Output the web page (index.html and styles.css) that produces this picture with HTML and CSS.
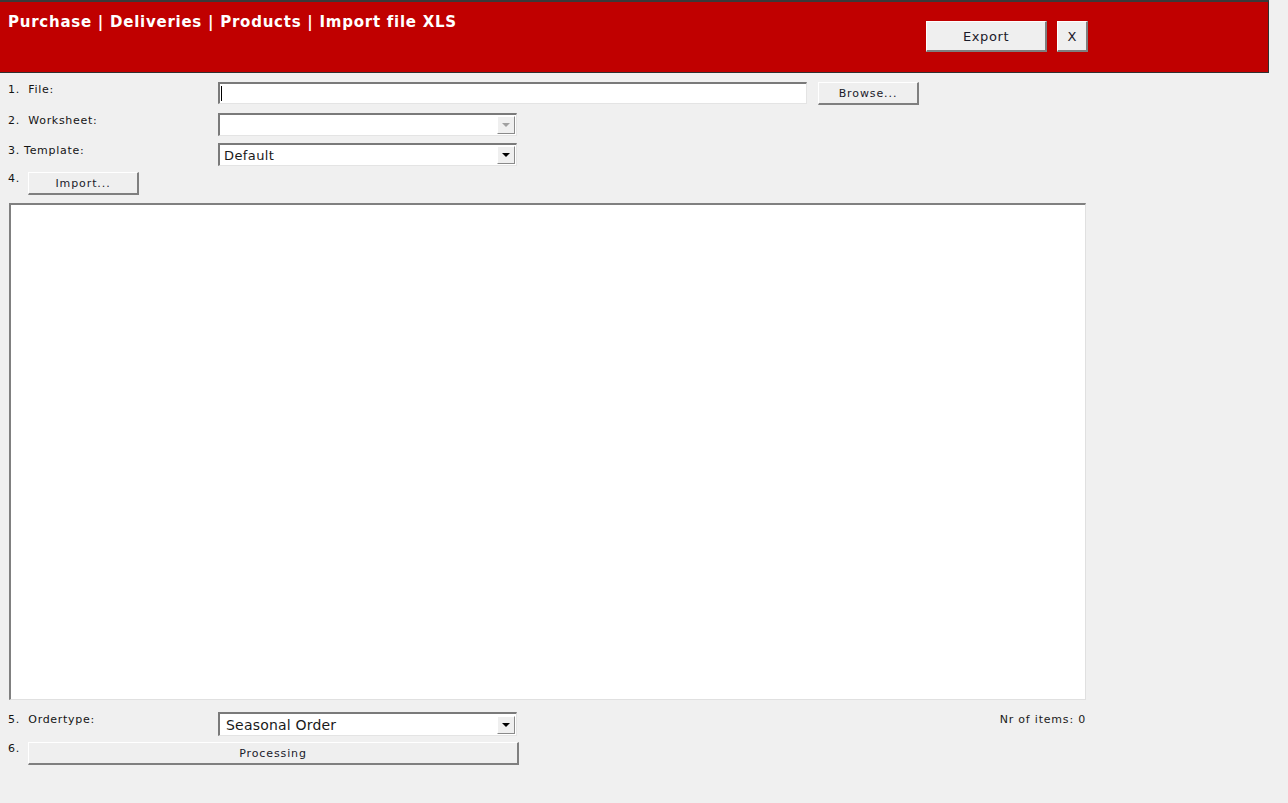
FILE: index.html
```html
<!DOCTYPE html>
<html lang="en">
<head>
  <meta charset="UTF-8" />
  <title>Purchase | Deliveries | Products | Import file XLS</title>
  <link rel="stylesheet" href="styles.css">
</head>
<body>
  <div class="header">
    <h1 class="title">Purchase | Deliveries | Products | Import file XLS</h1>
    <div class="header-actions">
      <button class="btn btn-export">Export</button>
      <button class="btn btn-close">X</button>
    </div>
  </div>

  <div class="form">
    <div class="row row-file">
      <label class="label">1.&nbsp; File:</label>
      <div class="field field-file"><span class="caret"></span></div>
      <button class="btn btn-small btn-browse">Browse...</button>
    </div>

    <div class="row row-sheet">
      <label class="label">2.&nbsp; Worksheet:</label>
      <div class="combo combo-disabled">
        <span class="combo-value"></span>
        <span class="combo-arrow"></span>
      </div>
    </div>

    <div class="row row-template">
      <label class="label">3. Template:</label>
      <div class="combo">
        <span class="combo-value">Default</span>
        <span class="combo-arrow"></span>
      </div>
    </div>

    <div class="row row-import">
      <label class="label label-num">4.</label>
      <button class="btn btn-small btn-import">Import...</button>
    </div>

    <div class="grid-box"></div>

    <div class="row row-order">
      <label class="label">5.&nbsp; Ordertype:</label>
      <div class="combo combo-order">
        <span class="combo-value">Seasonal Order</span>
        <span class="combo-arrow"></span>
      </div>
      <span class="count">Nr of items: 0</span>
    </div>

    <div class="row row-process">
      <label class="label label-num">6.</label>
      <button class="btn btn-small btn-process">Processing</button>
    </div>
  </div>
</body>
</html>
```

FILE: styles.css
```css
body {
  margin: 0;
  background: #f0f0f0;
  font-family: "DejaVu Sans", Verdana, sans-serif;
  color: #1a1a1a;
}

/* top bar */
.header {
  box-sizing: border-box;
  width: 1269px;
  height: 73px;
  background: #c00000;
  border-top: 2px solid #3a3a3a;
  border-right: 1px solid #303030;
  border-bottom: 1px solid #303030;
  display: flex;
  justify-content: space-between;
  align-items: flex-start;
}
.title {
  margin: 10px 0 0 8px;
  font-size: 15px;
  line-height: 20px;
  font-weight: bold;
  color: #fff;
  letter-spacing: 0.75px;
}
.header-actions {
  display: flex;
  gap: 10px;
  margin: 19px 180px 0 0;
}

/* buttons */
.btn {
  box-sizing: border-box;
  background: #efefef;
  border-top: 1px solid #ffffff;
  border-left: 1px solid #ffffff;
  border-right: 2px solid #7f7f7f;
  border-bottom: 2px solid #7f7f7f;
  font-family: "DejaVu Sans", Verdana, sans-serif;
  color: #1a1a2a;
  padding: 0;
  cursor: pointer;
}
.btn-export {
  width: 121px;
  height: 31px;
  font-size: 13px;
  letter-spacing: 0.6px;
}
.btn-close {
  width: 31px;
  height: 31px;
  font-size: 13px;
}
.btn-small {
  height: 23px;
  font-size: 11px;
  letter-spacing: 0.9px;
}
.btn-browse {
  width: 101px;
  margin-left: 11px;
}
.btn-import {
  width: 111px;
}
.btn-process {
  width: 491px;
}

/* form rows */
.form {
  padding: 9px 0 0 0;
}
.row {
  display: flex;
  align-items: flex-start;
}
.row-sheet {
  margin-top: 8px;
}
.row-template {
  margin-top: 7px;
}
.row-import {
  margin-top: 6px;
}
.row-order {
  margin-top: 12px;
  width: 1086px;
}
.row-process {
  margin-top: 6px;
}
.label {
  box-sizing: border-box;
  width: 218px;
  padding: 1px 0 0 8px;
  font-size: 11px;
  line-height: 14px;
  letter-spacing: 0.7px;
  color: #141414;
}
.label-num {
  width: 28px;
  padding-top: 0;
}

/* inset fields */
.field,
.combo {
  box-sizing: border-box;
  background: #fff;
  border-top: 2px solid #7a7a7a;
  border-left: 2px solid #7a7a7a;
  border-right: 1px solid #e4e4e4;
  border-bottom: 1px solid #e4e4e4;
}
.field-file {
  width: 589px;
  height: 22px;
  position: relative;
}
.caret {
  position: absolute;
  left: 1px;
  top: 2px;
  width: 1px;
  height: 15px;
  background: #000;
}
.combo {
  width: 299px;
  height: 23px;
  display: flex;
  align-items: center;
  justify-content: space-between;
}
.combo-order {
  height: 24px;
}
.combo-value {
  padding-left: 4px;
  font-size: 13px;
  letter-spacing: 0.4px;
  color: #1a1a1a;
}
.combo-order .combo-value {
  padding-left: 6px;
  font-size: 14px;
  letter-spacing: 0.2px;
}
.combo-arrow {
  box-sizing: border-box;
  width: 18px;
  height: 18px;
  margin-right: 1px;
  background: #efefef;
  border-top: 1px solid #fff;
  border-left: 1px solid #fff;
  border-right: 1px solid #8a8a8a;
  border-bottom: 1px solid #8a8a8a;
  display: flex;
  align-items: center;
  justify-content: center;
}
.combo-arrow::after {
  content: "";
  border-left: 4px solid transparent;
  border-right: 4px solid transparent;
  border-top: 4px solid #000;
}
.combo-disabled .combo-arrow::after {
  border-top-color: #a0a0a0;
}

/* data area */
.grid-box {
  box-sizing: border-box;
  width: 1077px;
  height: 497px;
  margin: 8px 0 0 9px;
  background: #fff;
  border-top: 2px solid #808080;
  border-left: 2px solid #808080;
  border-right: 1px solid #e0e0e0;
  border-bottom: 1px solid #e0e0e0;
}

.count {
  margin-left: auto;
  padding-top: 1px;
  font-size: 11px;
  line-height: 14px;
  letter-spacing: 0.8px;
}
```
